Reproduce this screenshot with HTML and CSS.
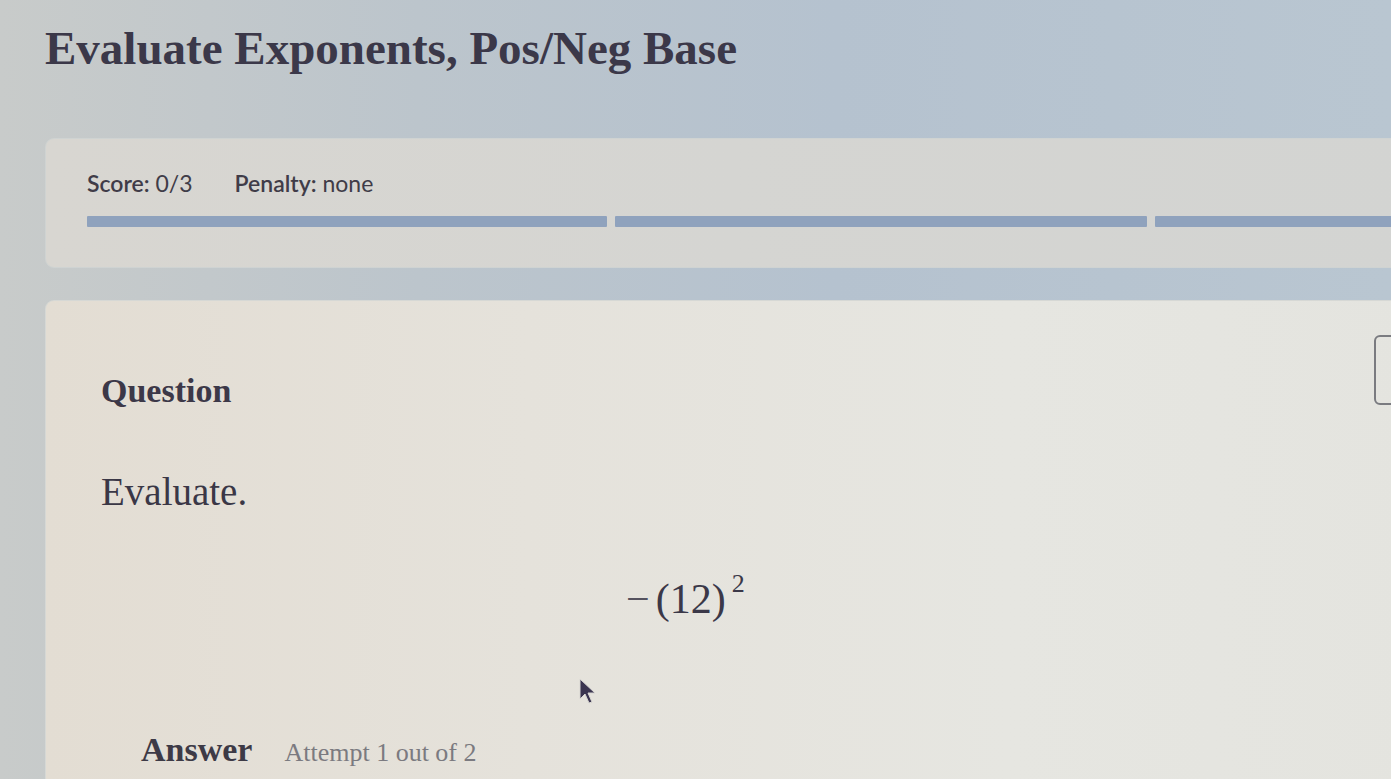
FILE: index.html
```html
<!DOCTYPE html>
<html lang="en">
<head>
<meta charset="utf-8">
<title>Evaluate Exponents, Pos/Neg Base</title>
<link rel="stylesheet" href="styles.css">
</head>
<body>
<div class="page">
  <h1 class="title">Evaluate Exponents, Pos/Neg Base</h1>

  <section class="card score-card">
    <div class="score-row">
      <span class="score"><b>Score:</b> 0/3</span>
      <span class="penalty"><b>Penalty:</b> none</span>
    </div>
    <div class="progress">
      <div class="seg seg1"></div>
      <div class="seg seg2"></div>
      <div class="seg seg3"></div>
    </div>
  </section>

  <section class="card question-card">
    <div class="q-head">
      <h2 class="q-label">Question</h2>
      <div class="side-btn"></div>
    </div>
    <p class="prompt">Evaluate.</p>
    <div class="math"><span class="minus">−</span>(12)<sup>2</sup></div>
    <div class="answer-row">
      <span class="answer-label">Answer</span>
      <span class="attempt">Attempt 1 out of 2</span>
    </div>
  </section>
</div>
<svg class="cursor" width="22" height="30" viewBox="0 0 22 30"><path d="M2 2 L2 22 L7 17 L11 26 L14 25 L10 16 L17 16 Z" fill="#3b3550" stroke="#d8d6d2" stroke-width="1"/></svg>
</body>
</html>
```
FILE: styles.css
```css
html, body {
  margin: 0;
  padding: 0;
  height: 100%;
  overflow: hidden;
}
body {
  background: linear-gradient(90deg, #c8cbca 0%, #bcc5cc 30%, #b5c2cf 60%, #b9c6d1 100%);
  font-family: "Liberation Serif", "Times New Roman", serif;
  color: #3a3746;
  position: relative;
}
.page {
  padding-left: 45px;
  margin-right: -30px;
}
.title {
  margin: 0;
  padding-top: 20px;
  font-size: 47px;
  line-height: 56px;
  font-weight: bold;
  color: #3b3849;
}
.card {
  border-radius: 9px;
}
.score-card {
  margin-top: 62px;
  height: 130px;
  box-sizing: border-box;
  background: linear-gradient(90deg, #d8d6d1 0%, #d5d5d2 50%, #d3d4d2 100%);
  border: 1px solid #cfd3d2;
  padding: 29px 0 0 41px;
  font-family: Lato, "Liberation Sans", sans-serif;
}
.score-row {
  display: flex;
  gap: 42px;
  font-size: 23px;
  color: #403c48;
  line-height: 30px;
}
.score-row b {
  font-weight: 600;
}
.progress {
  display: flex;
  gap: 8px;
  margin-top: 18px;
}
.seg {
  height: 11px;
  background: #8fa2bd;
  border-radius: 1px;
}
.seg1 { width: 520px; }
.seg2 { width: 532px; }
.seg3 { flex: 1; }
.question-card {
  margin-top: 32px;
  height: 479px;
  background: linear-gradient(90deg, #e3ddd3 0%, #e5e2db 35%, #e6e6e1 70%, #e4e4df 100%);
  border: 1px solid #d6d8d5;
  border-bottom: none;
  border-radius: 9px 9px 0 0;
  padding: 0 0 0 55px;
  box-sizing: border-box;
}
.q-head {
  display: flex;
  justify-content: space-between;
  align-items: flex-start;
  padding-top: 34px;
}
.q-label {
  margin: 36px 0 0 0;
  font-size: 34px;
  line-height: 40px;
  font-weight: bold;
  color: #3c3848;
}
.side-btn {
  width: 60px;
  height: 70px;
  border: 2px solid #7a7b80;
  border-radius: 6px;
  margin-right: -14px;
  box-sizing: border-box;
}
.prompt {
  margin: 58px 0 0 0;
  font-size: 39px;
  line-height: 46px;
  color: #3a3746;
}
.math {
  margin-top: 56px;
  padding-left: 525px;
  font-size: 42px;
  line-height: 56px;
  color: #3b3848;
}
.math .minus {
  color: #55525e;
  margin-right: 6px;
}
.math sup {
  font-size: 26px;
  vertical-align: 21px;
  line-height: 0;
  margin-left: 6px;
}
.answer-row {
  margin-top: 104px;
  padding-left: 40px;
  display: flex;
  align-items: baseline;
  gap: 32px;
}
.answer-label {
  font-size: 34px;
  font-weight: bold;
  color: #3d3a46;
}
.attempt {
  font-size: 26px;
  color: #7b7a80;
}
.cursor {
  position: absolute;
  left: 578px;
  top: 677px;
}
```
